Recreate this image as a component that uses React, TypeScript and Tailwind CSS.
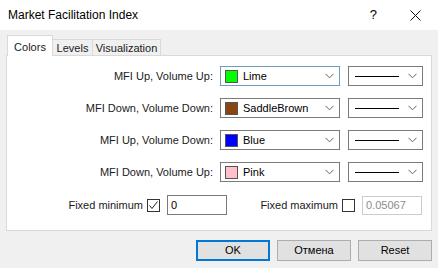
import React from "react";

const font = { fontFamily: '"Liberation Sans", Arial, sans-serif' };

function Chevron() {
  return (
    <svg width="9" height="6" viewBox="0 0 9 6" className="shrink-0">
      <polyline points="0.5,0.8 4.5,4.8 8.5,0.8" fill="none" stroke="#5f5f5f" strokeWidth="1" />
    </svg>
  );
}

interface ColorRow {
  label: string;
  name: string;
  swatch: string;
  focused?: boolean;
}

const rows: ColorRow[] = [
  { label: "MFI Up, Volume Up:", name: "Lime", swatch: "#00ff00", focused: true },
  { label: "MFI Down, Volume Down:", name: "SaddleBrown", swatch: "#8b4513" },
  { label: "MFI Up, Volume Down:", name: "Blue", swatch: "#0000ff" },
  { label: "MFI Down, Volume Up:", name: "Pink", swatch: "#ffc0cb" },
];

function CheckBox({ checked }: { checked?: boolean }) {
  return (
    <div className="flex h-[13px] w-[13px] shrink-0 items-center justify-center border border-[#333333] bg-white">
      {checked && (
        <svg width="11" height="11" viewBox="0 0 11 11">
          <polyline points="1.5,5.5 4,8.5 9.5,1.5" fill="none" stroke="#222222" strokeWidth="1" />
        </svg>
      )}
    </div>
  );
}

function Button({ label, primary }: { label: string; primary?: boolean }) {
  return (
    <button
      type="button"
      className={
        primary
          ? "h-[21px] w-[74px] border-2 border-[#0078d7] bg-[#e1e1e1] text-[11px] text-black"
          : "h-[21px] w-[74px] border border-[#adadad] bg-[#e1e1e1] text-[11px] text-black"
      }
    >
      {label}
    </button>
  );
}

export default function App() {
  return (
    <div className="flex h-[268px] w-[438px] flex-col overflow-hidden bg-[#f0f0f0] text-[#1a1a1a]" style={font}>
      {/* title bar */}
      <div className="flex h-[30px] shrink-0 items-center bg-white pl-[8px] pr-[17px]">
        <span className="text-[12px] text-black">Market Facilitation Index</span>
        <span className="ml-auto mr-[33px] text-[13px] text-black">?</span>
        <svg width="11" height="11" viewBox="0 0 11 11">
          <path d="M0.5 0.5 L10.5 10.5 M10.5 0.5 L0.5 10.5" stroke="#111111" strokeWidth="1" />
        </svg>
      </div>

      <div className="flex flex-col px-[6px] pt-[5px]">
        {/* tabs */}
        <div className="relative z-10 -mb-px flex items-end pl-[1px] text-[11px]">
          <div className="flex h-[21px] w-[46px] items-start justify-center border border-b-0 border-[#d9d9d9] bg-white pt-[3px]">
            Colors
          </div>
          <div className="flex h-[17px] w-[40px] items-center justify-center border border-l-0 border-[#d9d9d9] bg-[#f0f0f0] pt-[1px]">
            Levels
          </div>
          <div className="flex h-[17px] w-[68px] items-center justify-center border border-l-0 border-[#d9d9d9] bg-[#f0f0f0] pt-[1px]">
            Visualization
          </div>
        </div>

        {/* panel */}
        <div className="flex h-[176px] flex-col border border-[#d9d9d9] bg-white pt-[10px] text-[11px]">
          <div className="flex flex-col gap-[12px]">
            {rows.map((r) => (
              <div key={r.label} className="flex h-[20px] items-center">
                <div className="w-[207px] pr-[1px] text-right">{r.label}</div>
                <div
                  className={
                    r.focused
                      ? "ml-[6px] flex h-[20px] w-[120px] items-center border border-[#6f9dbd] pl-[4px] pr-[5px]"
                      : "ml-[6px] flex h-[20px] w-[120px] items-center border border-[#7a7a7a] pl-[4px] pr-[5px]"
                  }
                >
                  <div className="h-[13px] w-[13px] shrink-0 border border-[#555555]" style={{ backgroundColor: r.swatch }} />
                  <span className="ml-[5px] flex-1 text-black">{r.name}</span>
                  <Chevron />
                </div>
                <div className="ml-[8px] flex h-[20px] w-[75px] items-center border border-[#7a7a7a] pl-[6px] pr-[5px]">
                  <div className="h-px w-[44px] bg-black" />
                  <div className="flex-1" />
                  <Chevron />
                </div>
              </div>
            ))}
          </div>

          <div className="mt-[13px] flex h-[20px] items-center">
            <div className="flex w-[220px] items-center justify-end">
              <span>Fixed minimum</span>
              <div className="ml-[4px]">
                <CheckBox checked />
              </div>
              <div className="ml-[7px] flex h-[20px] w-[60px] items-center border border-[#7a7a7a] pl-[3px] text-black">0</div>
            </div>
            <div className="flex flex-1 items-center justify-end pr-[9px]">
              <span>Fixed maximum</span>
              <div className="ml-[4px]">
                <CheckBox />
              </div>
              <div className="ml-[7px] flex h-[19px] w-[60px] items-center border border-[#cccccc] pl-[3px] text-[#8c8c8c]">
                0.05067
              </div>
            </div>
          </div>
        </div>

        {/* buttons */}
        <div className="mt-[9px] flex justify-end gap-[7px]">
          <Button label="OK" primary />
          <Button label="Отмена" />
          <Button label="Reset" />
        </div>
      </div>
    </div>
  );
}
